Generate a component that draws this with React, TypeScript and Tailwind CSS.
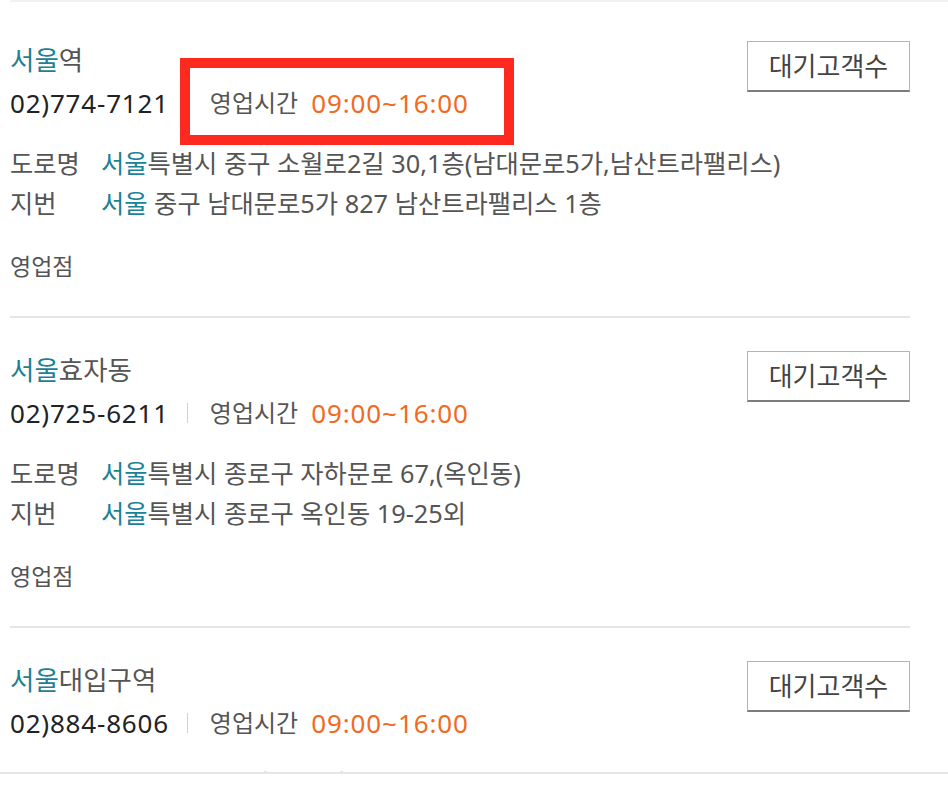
import React from 'react';

type Branch = {
  prefix: string;
  rest: string;
  phone: string;
  hours: string;
  road: { city: string; rest: string };
  lot: { city: string; rest: string };
  kind: string;
};

const branches: Branch[] = [
  {
    prefix: '서울',
    rest: '역',
    phone: '02)774-7121',
    hours: '09:00~16:00',
    road: { city: '서울', rest: '특별시 중구 소월로2길 30,1층(남대문로5가,남산트라팰리스)' },
    lot: { city: '서울', rest: ' 중구 남대문로5가 827 남산트라팰리스 1층' },
    kind: '영업점',
  },
  {
    prefix: '서울',
    rest: '효자동',
    phone: '02)725-6211',
    hours: '09:00~16:00',
    road: { city: '서울', rest: '특별시 종로구 자하문로 67,(옥인동)' },
    lot: { city: '서울', rest: '특별시 종로구 옥인동 19-25외' },
    kind: '영업점',
  },
  {
    prefix: '서울',
    rest: '대입구역',
    phone: '02)884-8606',
    hours: '09:00~16:00',
    road: { city: '서울', rest: '특별시 관악구 관악로 158' },
    lot: { city: '서울', rest: ' 관악구 봉천동 1598-3' },
    kind: '영업점',
  },
];

const font = { fontFamily: '"Noto Sans", "Noto Sans CJK KR", sans-serif' };

function BranchItem({ b }: { b: Branch }) {
  return (
    <div className="pt-[36px] pb-[35px] border-b-2 border-[#e6e6e6]">
      <div className="flex justify-between items-start">
        <div>
          <div className="text-[26.5px] leading-[32px] text-[#555]">
            <span className="text-[#1a8196]">{b.prefix}</span>
            {b.rest}
          </div>
          <div className="mt-[11px] flex items-center leading-[32px]">
            <span className="text-[26px] tracking-[0.8px] text-[#222]">{b.phone}</span>
            <span className="ml-[18px] mr-[22px] w-px h-[20px] bg-[#d0d0d0]" />
            <span className="text-[24px] text-[#555]">영업시간</span>
            <span className="ml-[13px] text-[26px] tracking-[0.9px] text-[#f26a22]">{b.hours}</span>
          </div>
        </div>
        <button className="-mt-[3px] w-[163px] h-[51px] border border-[#b4b4b4] border-b-2 border-b-[#7d7d7d] bg-white text-[26px] text-[#444]">
          대기고객수
        </button>
      </div>
      <div className="mt-[24px] grid grid-cols-[91px_1fr] text-[25.3px] leading-[40px] text-[#555]">
        <span>도로명</span>
        <span>
          <span className="text-[#1a8196]">{b.road.city}</span>
          {b.road.rest}
        </span>
        <span>지번</span>
        <span className="whitespace-pre">
          <span className="text-[#1a8196]">{b.lot.city}</span>
          {b.lot.rest}
        </span>
      </div>
      <div className="mt-[28px] text-[23px] leading-[30px] text-[#555]">{b.kind}</div>
    </div>
  );
}

export default function App() {
  return (
    <div className="relative h-[792px] overflow-hidden bg-white" style={font}>
      <div className="ml-[10px] h-[2px] bg-[#f2f2f2]" />
      <div className="pt-[6px] pl-[10px] w-[910px]">
        {branches.map((b) => (
          <BranchItem key={b.rest} b={b} />
        ))}
      </div>

      {/* annotation highlight */}
      <div className="absolute left-[180px] top-[58px] w-[334px] h-[87px] border-[10px] border-[#ff2a1f]" />

      <div className="absolute left-0 right-0 top-[772px] h-[20px] bg-white border-t-2 border-[#e6e6e6]" />
    </div>
  );
}
